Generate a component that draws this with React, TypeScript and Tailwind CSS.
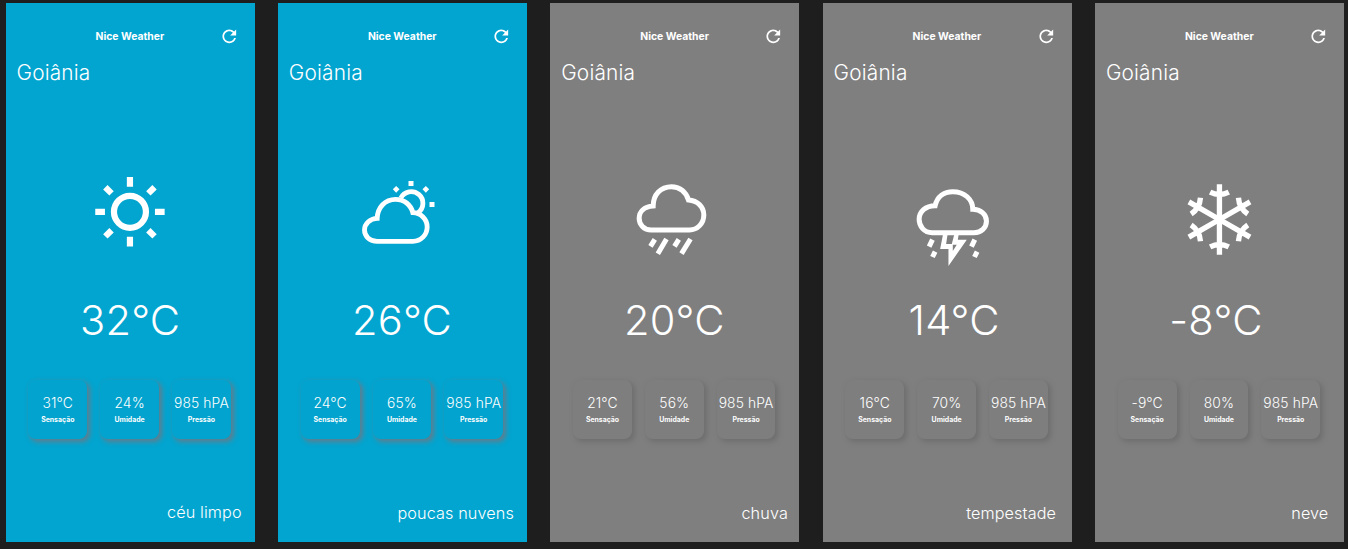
import React from "react";
import { MdRefresh } from "react-icons/md";

const CLOUDY = (
  <g transform="scale(0.33333)" fill="none" stroke="#fff" strokeWidth="14.5">
    <path d="M83 229C60 229 45 213 45 195C45 176 61 161 83 160C84 127 107 103 138 103C164 103 184 119 190 143C214 143 233 163 233 186C233 210 214 229 190 229Z" />
    <path d="M154 99A35 35 0 1 1 206 143" />
    <path d="M177 48h15v15h-15zM240 111h15v15h-15zM140 63l10 10l-10 10l-10 -10zM229 63l10 10l-10 10l-10 -10z" fill="#fff" stroke="none" />
  </g>
);

const SUN = (
  <g transform="translate(50.1 51.8)" fill="none" stroke="#fff" strokeWidth="6.2">
    <circle r="16" />
    <path d="M0 -34.7V-25M0 34.7V25M-34.7 0H-25M34.7 0H25" />
    <path d="M-24.6 -24.6L-18.4 -18.4M24.6 -24.6L18.4 -18.4M-24.6 24.6L-18.4 18.4M24.6 24.6L18.4 18.4" />
  </g>
);

const RAIN = (
  <g transform="scale(0.33333)" fill="none" stroke="#fff" strokeWidth="15">
    <path d="M78 180C56 180 42 163 42 145C42 126 56 110 84 108C84 73 107 50 139 50C163 50 183 65 190 90C217 92 236 110 236 135C236 160 217 180 193 180Z" />
    <path d="M89 208L76 229M124 207L98 251M161 208L148 229M196 207L169 251" />
  </g>
);

const STORM = (
  <g transform="scale(0.33333)" fill="none" stroke="#fff">
    <path strokeWidth="15" d="M88 173C64 173 49 154 49 133C49 110 68 92 97 92C103 65 124 50 150 50C185 50 210 73 210 103C233 103 251 118 251 138C251 158 235 173 214 173Z" />
    <path
      fill="#fff"
      fillRule="evenodd"
      stroke="none"
      d="M121 176L112 222H137V273L192 194H165L168 176ZM134 180L130 207H147L154 180ZM150 209V228L162 209Z"
    />
    <path strokeWidth="15" d="M89 194L79 215M97 230L89 246M216 194L206 215M223 230L215 246" />
  </g>
);

const SNOW = (
  <g transform="translate(49 49.5) scale(0.33333)" fill="none" stroke="#fff" strokeWidth="16">
    {[0, 60, 120, 180, 240, 300].map((a) => (
      <path key={a} transform={`rotate(${a})`} d="M0 0V-106M-28 -82Q0 -68 28 -82" />
    ))}
  </g>
);

const SCREENS = [
  { icon: SUN, box: "0.15 0 100 110", bg: "bg-[#02a5d0]", cold: false, temp: "32°C", tempPad: "", feels: "31°C", hum: "24%", desc: "céu limpo", descPad: "pr-[13.2px] pb-[20px]" },
  { icon: CLOUDY, box: "2.5 -5 100 110", bg: "bg-[#02a5d0]", cold: false, temp: "26°C", tempPad: "pr-[1px]", feels: "24°C", hum: "65%", desc: "poucas nuvens", descPad: "pr-[13.2px] pb-[19px]" },
  { icon: RAIN, box: "-0.15 -10 100 110", bg: "bg-[#7f7f7f]", cold: true, temp: "20°C", tempPad: "pr-[1px]", feels: "21°C", hum: "56%", desc: "chuva", descPad: "pr-[11.6px] pb-[19px]" },
  { icon: STORM, box: "-5.8 -15 100 110", bg: "bg-[#7f7f7f]", cold: true, temp: "14°C", tempPad: "pl-[14px]", feels: "16°C", hum: "70%", desc: "tempestade", descPad: "pr-[15.8px] pb-[19px]" },
  { icon: SNOW, box: "-0.45 -10 100 110", bg: "bg-[#7f7f7f]", cold: true, temp: "-8°C", tempPad: "pr-[7px]", feels: "-9°C", hum: "80%", desc: "neve", descPad: "pr-[15.8px] pb-[19px]" },
];

function Stat({ value, label, cold }: { value: string; label: string; cold: boolean }) {
  return (
    <div
      className={`flex h-[59px] w-[58.8px] flex-col items-center rounded-[8px] pt-[15px] whitespace-nowrap ${
        cold
          ? "bg-[#7e7e7e] shadow-[2.8px_2.8px_5.5px_rgba(95,95,95,0.5)]"
          : "bg-[#02a3ce] shadow-[2.8px_2.8px_5.5px_rgba(120,115,125,0.8)]"
      }`}
    >
      <span className="text-[13.85px] leading-[17px] font-light tracking-[0.12px]">{value}</span>
      <span className="mt-[4.5px] text-[6.92px] leading-[8px] font-bold">{label}</span>
    </div>
  );
}

export default function App() {
  return (
    <div className="flex h-[549px] w-[1348px] gap-[23.05px] overflow-hidden bg-[#1e1e1e] pt-[2.5px] pl-[5.5px] font-['Inter',sans-serif] text-white">
      {SCREENS.map((s) => (
        <section key={s.desc} className={`flex h-[539px] w-[249.3px] shrink-0 flex-col ${s.bg}`}>
          <header className="grid grid-cols-[1fr_auto_1fr] items-center pt-[23px] pr-[15.5px]">
            <span />
            <h1 className="pl-[15px] text-[10.39px] leading-[21px] font-bold">Nice Weather</h1>
            <MdRefresh className="justify-self-end" size={20.6} />
          </header>
          <h2 className="mt-[10.5px] pl-[11px] text-[20.8px] leading-[32px] font-light tracking-[0.2px]">Goiânia</h2>
          <svg className="mx-auto mt-[71px] h-[110px] w-[100px] shrink-0" viewBox={s.box}>{s.icon}</svg>
          <p className={`mt-[23px] text-center text-[41.55px] leading-[54px] font-light tracking-[0.25px] ${s.tempPad}`}>{s.temp}</p>
          <div className="mt-[32.5px] flex gap-[13px] pl-[22.9px]">
            <Stat value={s.feels} label="Sensação" cold={s.cold} />
            <Stat value={s.hum} label="Umidade" cold={s.cold} />
            <Stat value="985 hPA" label="Pressão" cold={s.cold} />
          </div>
          <p className={`mt-auto text-right text-[16.2px] leading-[20px] font-light tracking-[0.12px] ${s.descPad}`}>{s.desc}</p>
        </section>
      ))}
    </div>
  );
}
